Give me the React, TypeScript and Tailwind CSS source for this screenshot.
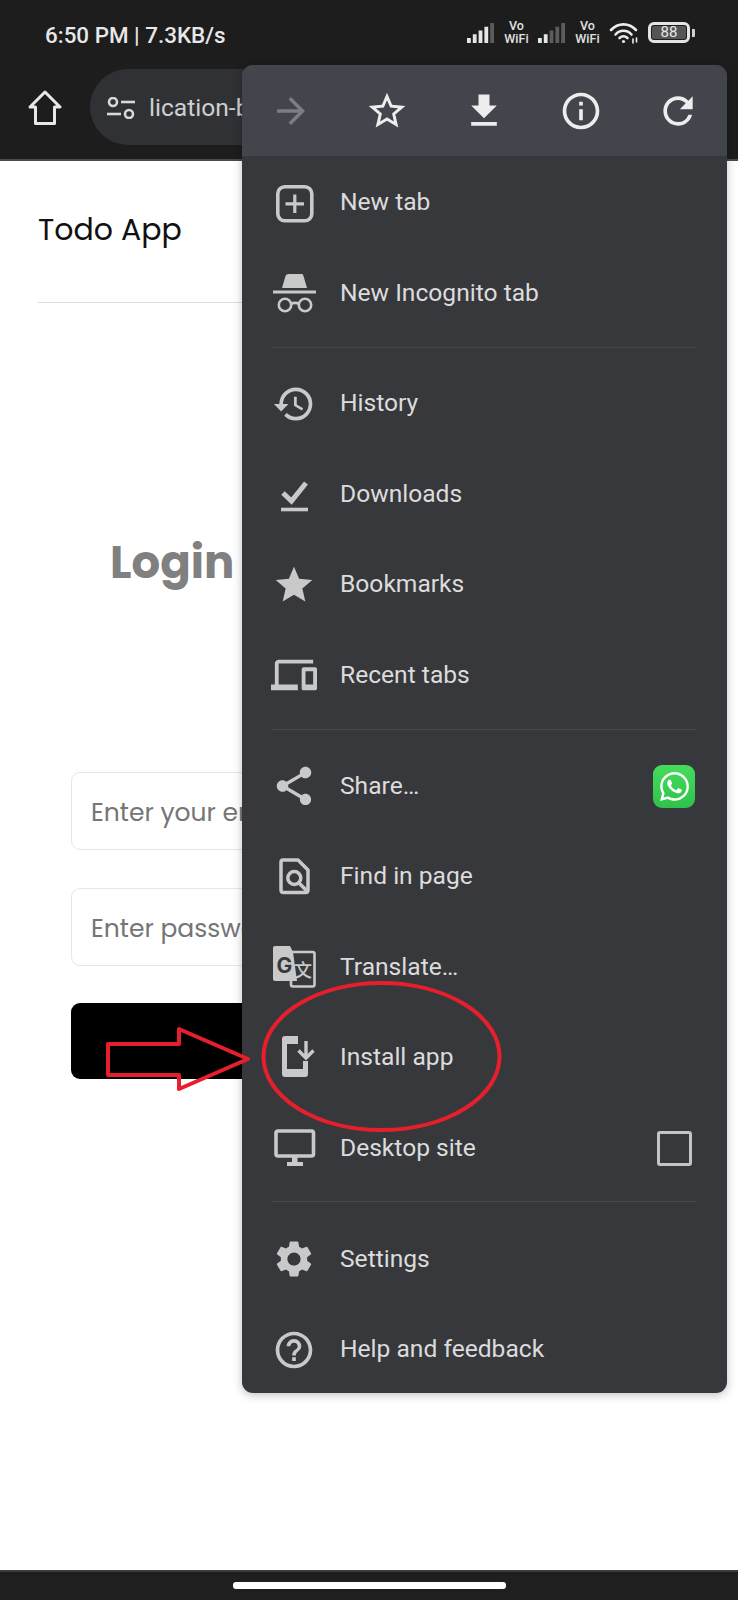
import React from "react";
import {
  MdArrowForward, MdStarBorder, MdFileDownload, MdInfoOutline, MdRefresh, MdHistory, MdStar, MdDevices, MdShare, MdSettings, MdHelpOutline,
} from "react-icons/md";
import { FaWhatsapp } from "react-icons/fa";

const ICON = "#c9c9c9";

function Signal({ bright }: { bright: number }) {
  const bars = [0, 1, 2, 3, 4];
  return (
    <svg width="28" height="20" viewBox="0 0 28 20">
      {bars.map((i) => {
        const h = 5 + i * 3.75;
        return <rect key={i} x={i * 5.8} y={20 - h} width="3.8" height={h} fill={i < bright ? "#e6e6e6" : "#5c5c5c"} />;
      })}
    </svg>
  );
}

function VoWifi() {
  return (
    <div className="flex flex-col items-center text-[12.5px] leading-[12.5px] font-medium text-[#e2e2e2] w-[25px] font-['Roboto',sans-serif]">
      <span>Vo</span>
      <span>WiFi</span>
    </div>
  );
}

function Wifi() {
  return (
    <svg width="30" height="22" viewBox="0 0 30 22" fill="none" stroke="#ececec" strokeWidth="2.6" strokeLinecap="round">
      <path d="M2 8 C9 0.5 20 0.5 27 8" />
      <path d="M6.5 12.5 C11 7.5 18 7.5 22.5 12.5" />
      <path d="M10.5 16 C13 13.8 16 13.8 18.5 16" />
      <circle cx="14.5" cy="19.5" r="1.6" fill="#ececec" stroke="none" />
      <path d="M24 17 V21 M27.5 16 V20" strokeWidth="1.6" />
    </svg>
  );
}

function Battery() {
  return (
    <div className="flex items-center gap-[2px]">
      <div className="w-[42px] h-[21px] rounded-[6px] border-[3px] border-[#e4e4e4] p-[1px] flex">
        <div className="w-[34px] h-full bg-[#555555] rounded-[2px] flex items-center justify-center text-[15px] leading-none text-[#e8e8e8] font-['Roboto',sans-serif]">
          88
        </div>
      </div>
      <div className="w-[3px] h-[8px] bg-[#cfcfcf] rounded-r-[1px]" />
    </div>
  );
}

function StatusBar() {
  return (
    <div className="h-[69px] flex items-start justify-between pl-[45px] pr-[43px] pt-[23px]">
      <span className="text-[22.4px] leading-[24px] font-medium text-[#e8e8e8] font-['Roboto',sans-serif]">6:50 PM | 7.3KB/s</span>
      <div className="flex items-center gap-[9px] -mt-[3px]">
        <Signal bright={4} />
        <VoWifi />
        <Signal bright={2} />
        <VoWifi />
        <Wifi />
        <Battery />
      </div>
    </div>
  );
}

function HomeIcon() {
  return (
    <svg width="34" height="36" viewBox="0 0 34 36" fill="none" stroke="#e8e8e8" strokeWidth="3" strokeLinejoin="round">
      <path d="M17 2 L32 17 H26.5 V33.5 H7.5 V17 H2 Z" />
    </svg>
  );
}

function TuneIcon() {
  return (
    <svg width="28" height="22" viewBox="0 0 28 22" fill="none" stroke="#d8d8d8" strokeWidth="2.6">
      <circle cx="6" cy="5" r="4" />
      <path d="M14 5 H28" />
      <path d="M0 17 H14" />
      <circle cx="22" cy="17" r="4" />
    </svg>
  );
}

function Toolbar() {
  return (
    <div className="h-[92px] flex items-start pl-[28px] border-b-[2px] border-[#4a4a4a]">
      <div className="mt-[21px]">
        <HomeIcon />
      </div>
      <div className="ml-[28px] w-[400px] h-[76px] rounded-full bg-[#303135] flex items-center pl-[17px] gap-[14px] pt-[2px]">
        <TuneIcon />
        <span className="text-[24.6px] text-[#cfcfcf] font-['Roboto',sans-serif]">lication-based</span>
      </div>
    </div>
  );
}

function PageContent() {
  const font = "font-['Poppins','Inter',sans-serif]";
  return (
    <div className={`flex-1 bg-white ${font}`}>
      <div className="mx-[38px] h-[142px] flex items-center border-b border-[#dedede] pb-[4px]">
        <span className="text-[30px] text-[#111111]">Todo App</span>
      </div>
      <div className="pl-[71px]">
        <div className="mt-[225px] pl-[39px] h-[69px] flex items-center">
          <span className="text-[45px] font-bold text-[#808080]">Login</span>
        </div>
        <div className="mt-[175px] h-[78px] w-[596px] rounded-[9px] border border-[#e6e6e6] flex items-center pl-[19px] pt-[3px]">
          <span className="text-[25px] text-[#757575]">Enter your email</span>
        </div>
        <div className="mt-[38px] h-[78px] w-[596px] rounded-[9px] border border-[#e6e6e6] flex items-center pl-[19px] pt-[3px]">
          <span className="text-[25px] text-[#757575]">Enter password</span>
        </div>
        <div className="mt-[37px] h-[76px] w-[596px] rounded-[9px] bg-black" />
      </div>
    </div>
  );
}

function NewTabIcon() {
  return (
    <svg width="46" height="46" viewBox="0 0 46 46" fill="none" stroke={ICON}>
      <rect x="6.8" y="6.8" width="34" height="34" rx="7" strokeWidth="3.6" />
      <path d="M23.8 14.5 V33 M14.5 23.8 H33" strokeWidth="3.2" />
    </svg>
  );
}

function IncognitoIcon() {
  return (
    <svg width="46" height="46" viewBox="0 0 46 46" fill="none" stroke={ICON}>
      <path d="M18 4 H31 Q32 4 32.5 6 L36 18 H11 L14.5 6 Q15 4 18 4 Z" fill={ICON} stroke="none" />
      <path d="M2 22 H45" strokeWidth="3" />
      <circle cx="14" cy="35" r="6.2" strokeWidth="2.6" />
      <circle cx="34" cy="35" r="6.2" strokeWidth="2.6" />
      <path d="M20 34 C22 32.5 26 32.5 28 34" strokeWidth="2.6" />
    </svg>
  );
}

function DownloadsIcon() {
  return (
    <svg width="46" height="46" viewBox="0 0 46 46" fill="none" stroke={ICON}>
      <path d="M10 38.5 H37" strokeWidth="3.6" />
      <path d="M12 22 L20.5 30 L35 12" strokeWidth="5" />
    </svg>
  );
}

function FindIcon() {
  return (
    <svg width="46" height="46" viewBox="0 0 46 46" fill="none" stroke={ICON} strokeWidth="3.5" strokeLinejoin="round">
      <path d="M12 6 H27 L37 16 V36 Q37 38.5 34.5 38.5 H12.5 Q10 38.5 10 36 V8 Q10 6 12 6 Z" />
      <circle cx="23.3" cy="24" r="6.5" />
      <path d="M28 29 L36 37" />
    </svg>
  );
}

function TranslateIcon() {
  return (
    <svg width="46" height="46" viewBox="0 0 46 46" fill="none">
      <rect x="20" y="8" width="23.5" height="34.5" rx="2" stroke={ICON} strokeWidth="2.6" />
      <path d="M4 2 H19 L22 8 L26 37 H4 Q2 37 2 35 V4 Q2 2 4 2 Z" fill={ICON} />
      <text x="13.5" y="29" textAnchor="middle" fontFamily="Inter, sans-serif" fontWeight="700" fontSize="21" fill="#37383c">G</text>
      <text x="32" y="33" textAnchor="middle" fontFamily="'Noto Sans CJK SC', sans-serif" fontWeight="500" fontSize="18" fill={ICON}>文</text>
    </svg>
  );
}

function InstallIcon() {
  return (
    <svg width="46" height="46" viewBox="0 0 46 46" fill="none">
      <path d="M14 1 H27 V9 H16 V34 H32 V26 H37 V39 Q37 42 34 42 H14 Q11 42 11 39 V4 Q11 1 14 1 Z" fill={ICON} />
      <path d="M35 6 V22 M27.5 15.5 L35 23 L42.5 15.5" stroke={ICON} strokeWidth="3.4" />
    </svg>
  );
}

function DesktopIcon() {
  return (
    <svg width="46" height="46" viewBox="0 0 46 46" fill="none">
      <rect x="5" y="6" width="37.5" height="25" rx="2" stroke={ICON} strokeWidth="3.6" />
      <rect x="21" y="32" width="5.5" height="6" fill={ICON} />
      <rect x="16" y="37" width="16" height="4" fill={ICON} />
    </svg>
  );
}

function Row({ icon, label, right }: { icon: React.ReactNode; label: string; right?: React.ReactNode }) {
  return (
    <div className="h-[90.5px] flex items-center pl-[29px]">
      <div className="w-[46px] h-[46px] flex items-center justify-center shrink-0">{icon}</div>
      <span className="ml-[23px] flex-1 text-[24.6px] text-[#dcdcdc] font-['Roboto',sans-serif]">{label}</span>
      {right}
    </div>
  );
}

function Divider({ top, bottom }: { top: string; bottom: string }) {
  return <div className={`h-px bg-[#48494d] ml-[30px] mr-[30px] ${top} ${bottom}`} />;
}

function TopIcons() {
  return (
    <div className="h-[91px] bg-[#43454d] flex items-center justify-between pl-[28px] pr-[27px]">
      <MdArrowForward size={42} color="#7c7e83" />
      <MdStarBorder size={44} color="#ededed" />
      <MdFileDownload size={44} color="#ededed" />
      <MdInfoOutline size={44} color="#ededed" />
      <MdRefresh size={44} color="#ededed" />
    </div>
  );
}

function Menu() {
  return (
    <div className="absolute left-[242px] top-[65px] w-[485px] h-[1328px] rounded-[11px] overflow-hidden bg-[#37383c] shadow-[0_2px_10px_rgba(0,0,0,0.25)]">
      <TopIcons />
      <div className="h-[1.5px]" />
      <Row icon={<NewTabIcon />} label="New tab" />
      <Row icon={<IncognitoIcon />} label="New Incognito tab" />
      <Divider top="mt-[8.5px]" bottom="mb-[10.5px]" />
      <Row icon={<MdHistory size={44} color={ICON} />} label="History" />
      <Row icon={<DownloadsIcon />} label="Downloads" />
      <Row icon={<MdStar size={44} color={ICON} />} label="Bookmarks" />
      <Row icon={<MdDevices size={46} color={ICON} />} label="Recent tabs" />
      <Divider top="mt-[8px]" bottom="mb-[11.5px]" />
      <Row
        icon={<MdShare size={46} color={ICON} />}
        label="Share…"
        right={
          <div className="mr-[32px] w-[42px] h-[43px] rounded-[9px] bg-gradient-to-b from-[#45dc5c] to-[#2fc14b] flex items-center justify-center">
            <FaWhatsapp size={33} color="#ffffff" />
          </div>
        }
      />
      <Row icon={<FindIcon />} label="Find in page" />
      <Row icon={<TranslateIcon />} label="Translate…" />
      <Row icon={<InstallIcon />} label="Install app" />
      <Row
        icon={<DesktopIcon />}
        label="Desktop site"
        right={<div className="mr-[35px] w-[35px] h-[35px] rounded-[3px] border-[3.5px] border-[#c4c4c4]" />}
      />
      <Divider top="mt-[7.5px]" bottom="mb-[12px]" />
      <Row icon={<MdSettings size={44} color={ICON} />} label="Settings" />
      <Row icon={<MdHelpOutline size={44} color={ICON} />} label="Help and feedback" />
    </div>
  );
}

function Annotations() {
  return (
    <svg className="absolute left-0 top-0 pointer-events-none" width="738" height="1600" viewBox="0 0 738 1600" fill="none" stroke="#e51f2c" strokeWidth="4">
      <path d="M108 1044 H179 V1029 L248 1059 L179 1089 V1075 H108 Z" strokeLinejoin="round" />
      <ellipse cx="381.5" cy="1056.5" rx="118" ry="73.5" />
    </svg>
  );
}

export default function App() {
  return (
    <div className="relative w-[738px] h-[1600px] overflow-hidden bg-[#1d1d1d] flex flex-col">
      <StatusBar />
      <Toolbar />
      <PageContent />
      <div className="h-[30px] bg-[#1f1f1f] border-t-[2px] border-[#3c3c3c] flex items-start justify-center pt-[10px]">
        <div className="w-[273px] h-[7px] rounded-[3px] bg-white" />
      </div>
      <Menu />
      <Annotations />
    </div>
  );
}
